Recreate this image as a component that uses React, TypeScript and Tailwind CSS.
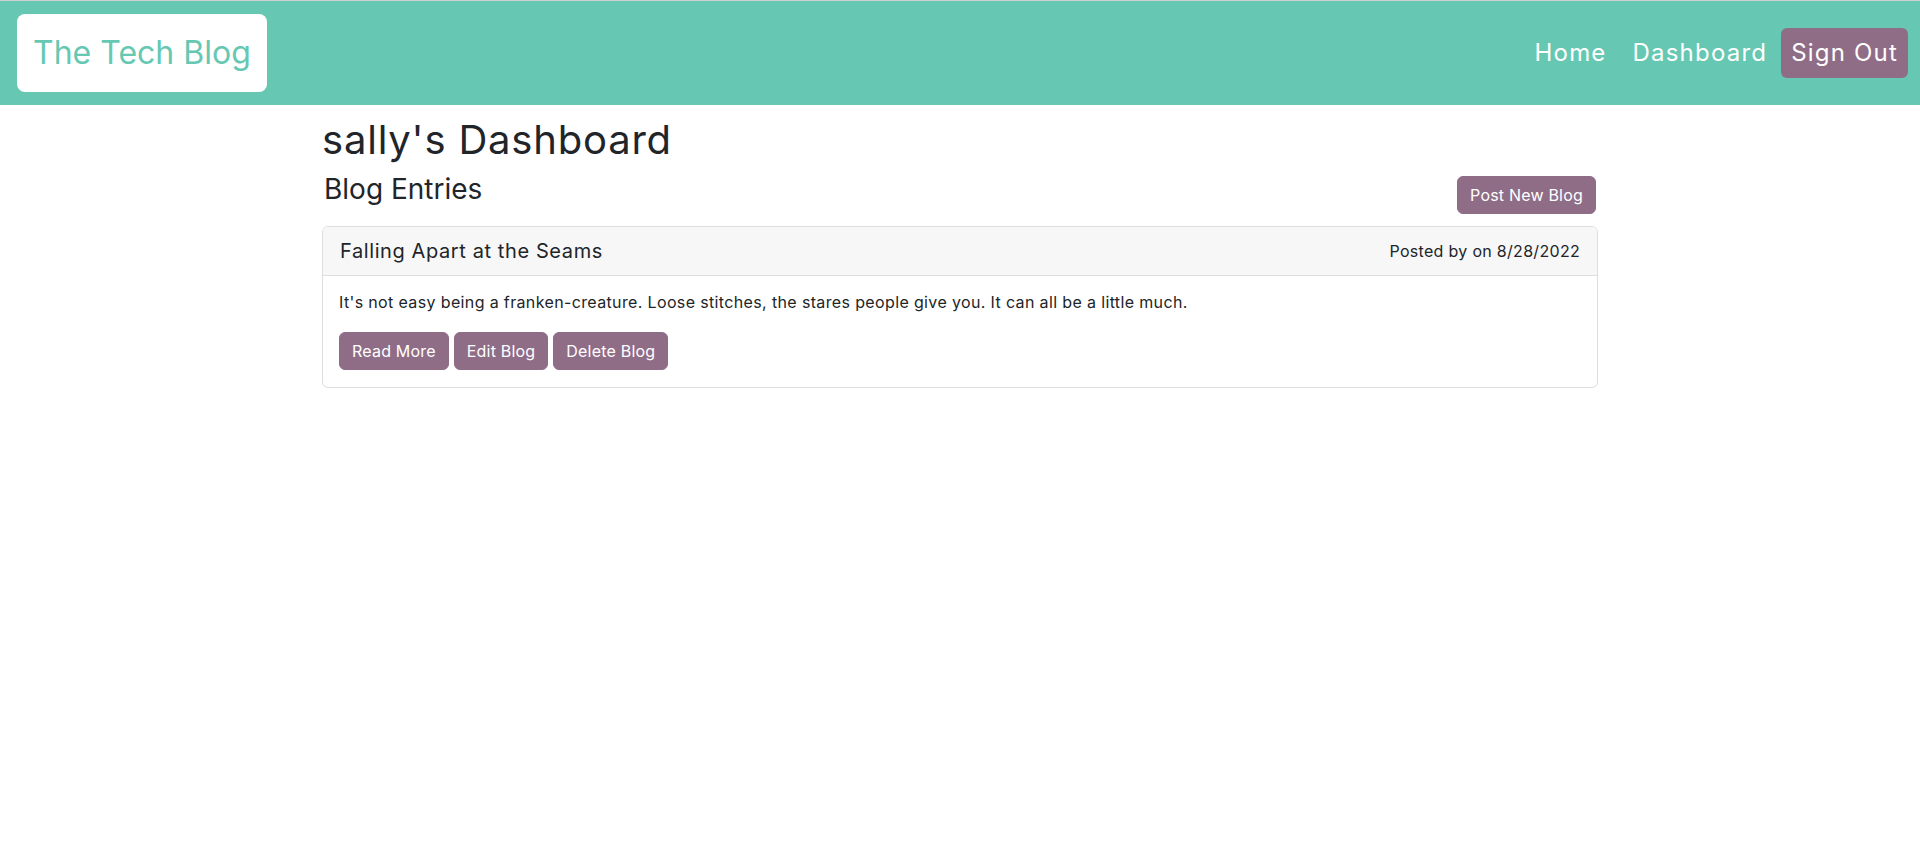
import React from 'react';

const btn =
  "inline-block rounded-[6px] bg-[#8f6d87] px-3 py-[6px] text-[16px] leading-[24px] tracking-[0.2px] text-white border border-[#8f6d87]";

export default function App() {
  return (
    <div className="min-h-screen bg-white font-['Inter',sans-serif] text-[#212529]">
      <header className="border-t border-[#cfcfcf] bg-[#66c8b2] flex items-center justify-between h-[105px] pl-[17px] pr-[12px]">
        <a className="flex items-center h-[78px] rounded-[8px] bg-white px-[16px] text-[32px] text-[#66c8b2]">
          The Tech Blog
        </a>
        <nav className="flex items-center text-[24px] tracking-[1.2px] text-white">
          <a className="px-[13px]">Home</a>
          <a className="px-[13px]">Dashboard</a>
          <a className="ml-[1px] flex items-center h-[50px] rounded-[6px] bg-[#8f6d87] px-[10px]">Sign Out</a>
        </nav>
      </header>

      <main className="mx-auto w-[1276px]">
        <h1 className="mt-[11px] text-[40px] leading-[48px] tracking-[0.8px]">sally's Dashboard</h1>
        <div className="flex items-start justify-between mt-[8px]">
          <h3 className="pl-[2px] text-[28px] leading-[34px]">Blog Entries</h3>
          <button className={btn + " mr-[2px] mt-[4px]"}>Post New Blog</button>
        </div>

        <div className="mt-[12px] rounded-[6px] border border-[#dedede]">
          <div className="flex items-center justify-between border-b border-[#dedede] bg-[#f7f7f7] px-[17px] h-[49px] rounded-t-[6px]">
            <h5 className="text-[20px] tracking-[0.6px]">Falling Apart at the Seams</h5>
            <span className="text-[16px] tracking-[0.3px]">Posted by on 8/28/2022</span>
          </div>
          <div className="px-[16px] pt-[14px] pb-[17px]">
            <p className="text-[16px] leading-[24px] tracking-[0.36px]">
              It's not easy being a franken-creature. Loose stitches, the stares people give you. It can all be a little much.
            </p>
            <div className="mt-[18px] flex gap-[5px]">
              <button className={btn}>Read More</button>
              <button className={btn}>Edit Blog</button>
              <button className={btn}>Delete Blog</button>
            </div>
          </div>
        </div>
      </main>
    </div>
  );
}
